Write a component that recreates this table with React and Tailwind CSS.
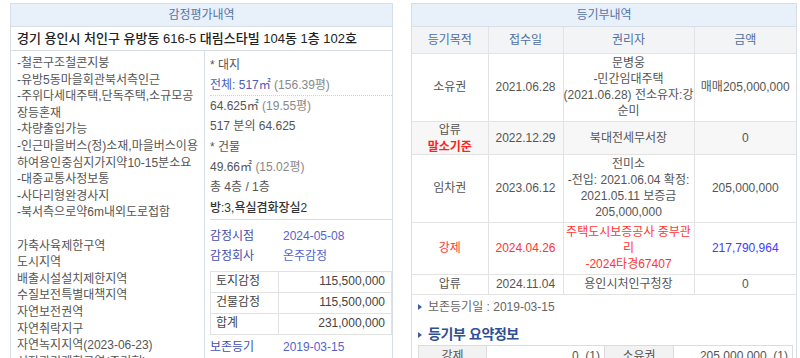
import React from 'react';

const leftLines = [
  '-철콘구조철콘지붕',
  '-유방5동마을회관북서측인근',
  '-주위다세대주택,단독주택,소규모공',
  '장등혼재',
  '-차량출입가능',
  '-인근마을버스(정)소재,마을버스이용',
  '하여용인중심지가지약10-15분소요',
  '-대중교통사정보통',
  '-사다리형완경사지',
  '-북서측으로약6m내외도로접함',
  '',
  '가축사육제한구역',
  '도시지역',
  '배출시설설치제한지역',
  '수질보전특별대책지역',
  '자연보전권역',
  '자연취락지구',
  '자연녹지지역(2023-06-23)',
  '성장관리계획구역(주거형)',
];

const appraisal = [
  { label: '토지감정', value: '115,500,000' },
  { label: '건물감정', value: '115,500,000' },
  { label: '합계', value: '231,000,000' },
];

const registry = [
  {
    purpose: '소유권',
    date: '2021.06.28',
    holder: ['문병웅', '-민간임대주택', '(2021.06.28) 전소유자:강', '순미'],
    amount: '매매205,000,000',
  },
  {
    purpose: '압류',
    base: true,
    date: '2022.12.29',
    holder: ['북대전세무서장'],
    amount: '0',
  },
  {
    purpose: '임차권',
    date: '2023.06.12',
    holder: ['전미소', '-전입: 2021.06.04 확정:', '2021.05.11 보증금', '205,000,000'],
    amount: '205,000,000',
  },
  {
    purpose: '강제',
    red: true,
    date: '2024.04.26',
    holder: ['주택도시보증공사 중부관', '리', '-2024타경67407'],
    amount: '217,790,964',
  },
  {
    purpose: '압류',
    date: '2024.11.04',
    holder: ['용인시처인구청장'],
    amount: '0',
  },
];

const Triangle = () => (
  <span className="inline-block w-0 h-0 border-y-[3.5px] border-y-transparent border-l-[4px] border-l-[#3d5c9c] mr-[6px]" />
);

const Line = ({ children, className = 'h-[16px] leading-[16px]' }) => (
  <div className={className}>{children}</div>
);

const App = () => {
  return (
    <div className="h-[358px] w-[800px] overflow-hidden bg-white font-['Liberation_Sans','Noto_Sans_CJK_KR',sans-serif] text-[12px] text-[#555]">
      <div className="flex items-start gap-[18px] pl-[10px] pt-[3px]">
        {/* 감정평가내역 */}
        <section className="w-[383px] border border-[#d8dee6]">
          <div className="h-[23px] bg-[#e8f0fa] border-b border-[#d8dee6] text-center leading-[23px] text-[#5574a8]">
            감정평가내역
          </div>
          <div className="h-[24px] border-b border-[#d8dee6] px-[6px] leading-[23px] text-[13px] font-medium text-[#222]">
            경기 용인시 처인구 유방동 616-5 대림스타빌 104동 1층 102호
          </div>
          <div className="flex">
            <div className="w-[194px] shrink-0 border-r border-[#d8dee6] px-[6px] pt-[4px] pb-[20px] whitespace-nowrap">
              {leftLines.map((line, i) => (
                <div key={i} className="h-[16.6px] leading-[16.6px]">{line}</div>
              ))}
            </div>
            <div className="flex-1 pl-[5px] pt-[4px] leading-[20.4px] whitespace-nowrap">
              <div className="h-[20.4px]">* 대지</div>
              <div className="h-[20.4px] border-b border-dotted border-[#d0d0d0]">
                <span className="text-[#4a5cc0]">전체: 517㎡</span>
                <span className="text-[#888]"> (156.39평)</span>
              </div>
              <div className="h-[20.4px]">
                64.625㎡ <span className="text-[#888]">(19.55평)</span>
              </div>
              <div className="h-[20.4px]">517 분의 64.625</div>
              <div className="h-[20.4px]">* 건물</div>
              <div className="h-[20.4px]">
                49.66㎡ <span className="text-[#888]">(15.02평)</span>
              </div>
              <div className="h-[20.4px]">총 4층 / 1층</div>
              <div className="h-[22px] border-b border-[#dcdcdc] font-medium text-[#333]">
                방:3,욕실겸화장실2
              </div>
              <div className="mt-[6px] flex h-[20px] leading-[20px]">
                <span className="w-[73px] text-[#3f4fae]">감정시점</span>
                <span className="text-[#5563cc]">2024-05-08</span>
              </div>
              <div className="flex h-[20px] leading-[20px]">
                <span className="w-[73px] text-[#3f4fae]">감정회사</span>
                <span className="text-[#5563cc]">온주감정</span>
              </div>
              <table className="mt-[5px] w-full border-collapse table-fixed">
                <colgroup>
                  <col className="w-[68px]" />
                  <col />
                </colgroup>
                <tbody>
                  {appraisal.map((row) => (
                    <tr key={row.label} className="h-[21px]">
                      <td className="border border-[#e2e2e2] px-[5px] leading-[19px] text-[#444]">{row.label}</td>
                      <td className="border border-[#e2e2e2] px-[6px] text-right leading-[19px] text-[#444]">{row.value}</td>
                    </tr>
                  ))}
                </tbody>
              </table>
              <div className="mt-[2px] flex h-[20px] leading-[20px]">
                <span className="w-[73px] text-[#3f4fae]">보존등기</span>
                <span className="text-[#5563cc]">2019-03-15</span>
              </div>
            </div>
          </div>
        </section>

        {/* 등기부내역 */}
        <section className="w-[386px] border border-[#d8dee6]">
          <div className="h-[23px] bg-[#e8f0fa] border-b border-[#d8dee6] text-center leading-[23px] text-[#5574a8]">
            등기부내역
          </div>
          <table className="w-full border-collapse table-fixed">
            <colgroup>
              <col className="w-[76px]" />
              <col className="w-[75px]" />
              <col className="w-[131px]" />
              <col />
            </colgroup>
            <thead>
              <tr className="h-[26px] bg-[#f3f4f6]">
                {['등기목적', '접수일', '권리자', '금액'].map((h) => (
                  <th key={h} className="border-r border-b border-[#e0e3e8] last:border-r-0 font-normal text-[#4f6fa3]">
                    <Line>{h}</Line>
                  </th>
                ))}
              </tr>
            </thead>
            <tbody>
              {registry.map((row, i) => {
                const color = row.red ? 'text-[#ff3535]' : 'text-[#555]';
                const pad = row.base ? 'py-0' : 'py-[1.5px]';
                return (
                  <tr key={i} className={row.base ? 'bg-[#f7f7f7]' : ''}>
                    <td className={`border-r border-b border-[#e3e3e3] ${pad} text-center ${color}`}>
                      <Line>{row.purpose}</Line>
                      {row.base && <Line className="h-[16px] leading-[18px] font-bold text-[#ff1f1f]">말소기준</Line>}
                    </td>
                    <td className={`border-r border-b border-[#e3e3e3] ${pad} text-center ${color}`}>
                      <Line>{row.date}</Line>
                    </td>
                    <td className={`border-r border-b border-[#e3e3e3] ${pad} text-center whitespace-nowrap ${color}`}>
                      {row.holder.map((h) => (
                        <Line key={h}>{h}</Line>
                      ))}
                    </td>
                    <td className={`border-b border-[#e3e3e3] ${pad} text-center ${row.red ? 'text-[#4040ff]' : 'text-[#555]'}`}>
                      <Line>{row.amount}</Line>
                    </td>
                  </tr>
                );
              })}
            </tbody>
          </table>
          <div className="px-[6px] pb-[20px]">
            <div className="mt-[4px] flex items-center h-[16px] text-[#666]">
              <Triangle />
              보존등기일 : 2019-03-15
            </div>
            <div className="mt-[11px] flex items-center h-[18px] text-[14px] font-bold tracking-[-0.4px] text-[#2f5092]">
              <Triangle />
              등기부 요약정보
            </div>
            <table className="mt-[1px] w-[375px] border-collapse table-fixed">
              <colgroup>
                <col className="w-[68px]" />
                <col className="w-[118px]" />
                <col className="w-[69px]" />
                <col />
              </colgroup>
              <tbody>
                <tr className="h-[21px]">
                  <td className="border border-[#dcdcdc] bg-[#f2f2f2] text-center">강제</td>
                  <td className="border border-[#dcdcdc] px-[4px] text-right">0&nbsp;&nbsp;(1)</td>
                  <td className="border border-[#dcdcdc] bg-[#f2f2f2] text-center">소유권</td>
                  <td className="border border-[#dcdcdc] px-[4px] text-right">205,000,000&nbsp;&nbsp;(1)</td>
                </tr>
                <tr className="h-[21px]">
                  <td className="border border-[#dcdcdc] bg-[#f2f2f2] text-center">압류</td>
                  <td className="border border-[#dcdcdc] px-[4px] text-right">0&nbsp;&nbsp;(2)</td>
                  <td className="border border-[#dcdcdc] bg-[#f2f2f2] text-center">임차권</td>
                  <td className="border border-[#dcdcdc] px-[4px] text-right">205,000,000&nbsp;&nbsp;(1)</td>
                </tr>
              </tbody>
            </table>
          </div>
        </section>
      </div>
    </div>
  );
};

export default App;
